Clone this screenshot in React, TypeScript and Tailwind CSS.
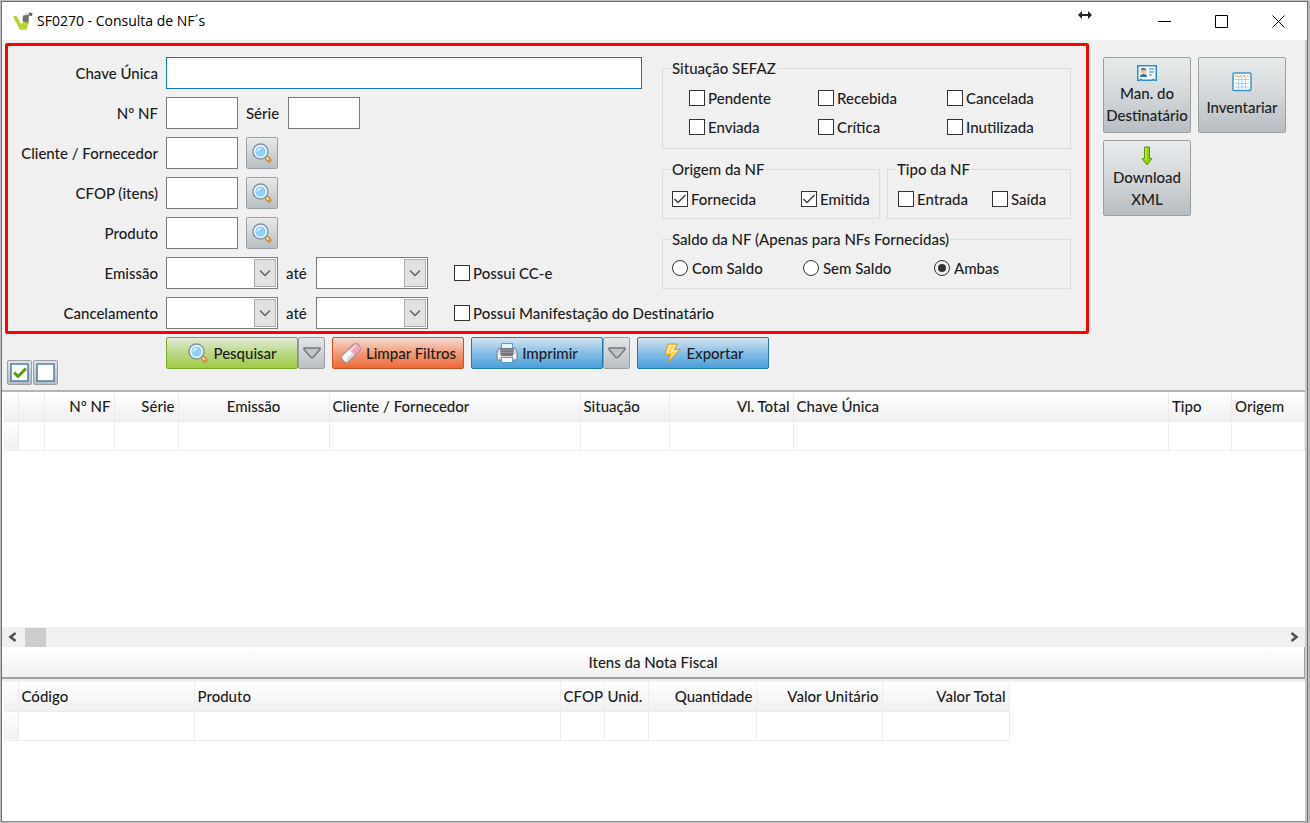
import React, { useId } from 'react';

interface Column {
    title: string;
    width?: number;
    align?: 'left' | 'center' | 'right';
}

const NOTE_COLUMNS: Column[] = [
    { title: '', width: 26 },
    { title: 'Nº NF', width: 70, align: 'right' },
    { title: 'Série', width: 64, align: 'right' },
    { title: 'Emissão', width: 151, align: 'center' },
    { title: 'Cliente / Fornecedor', width: 251 },
    { title: 'Situação', width: 89 },
    { title: 'Vl. Total', width: 124, align: 'right' },
    { title: 'Chave Única' },
    { title: 'Tipo', width: 63 },
    { title: 'Origem', width: 73 },
];

const ITEM_COLUMNS: Column[] = [
    { title: 'Código', width: 176 },
    { title: 'Produto', width: 366 },
    { title: 'CFOP', width: 44 },
    { title: 'Unid.', width: 44 },
    { title: 'Quantidade', width: 108, align: 'right' },
    { title: 'Valor Unitário', width: 126, align: 'right' },
    { title: 'Valor Total', width: 127, align: 'right' },
];

const ALIGN = {
    left: 'text-left',
    center: 'text-center',
    right: 'text-right',
};

const BUTTON_TONES = {
    green: 'border-[#7aa82a] from-[#e3ead8] via-[#bbd885] to-[#a0cb42]',
    orange: 'border-[#cc4f24] from-[#f3dcd3] via-[#f19a78] to-[#ec6a35]',
    blue: 'border-[#1f77b4] from-[#d6e4ee] via-[#84bde6] to-[#4a9fdb]',
};

/* ---------- icons ---------- */

const Magnifier = ({ size = 22 }: { size?: number }) => (
    <svg width={size} height={size} viewBox="0 0 22 22" aria-hidden="true" className="shrink-0">
        <path d="M14.5 14.5l2 2" stroke="#8d9298" strokeWidth="2.5" />
        <path d="M16.3 16.3l1.7 1.7" stroke="#c98a35" strokeWidth="5" strokeLinecap="round" />
        <path d="M16 16l1.5 1.5" stroke="#f5cf8e" strokeWidth="2.4" strokeLinecap="round" />
        <circle cx="9.5" cy="9.5" r="7.5" fill="#8ccdf4" stroke="#858e99" strokeWidth="1.5" />
        <circle cx="9.5" cy="9.5" r="6" fill="#8fd0f7" stroke="#eef6fb" strokeWidth="1.6" />
        <path d="M5.5 10a4.300 4.300 0 0 1 4.500-4.500c-.4 2.500-1.900 4-4.500 4.500z" fill="#d2edfd" />
    </svg>
);

const Eraser = () => (
    <svg width="22" height="22" viewBox="0 0 22 22" aria-hidden="true" className="shrink-0">
        <g transform="rotate(-45 11 11)">
            <rect x="0" y="6.500" width="22" height="9" rx="4" fill="#f4f4f6" stroke="#8e8488" />
            <path d="M12 7h6.500a3 3 0 0 1 3 3v2a3 3 0 0 1-3 3H12z" fill="#f3a3ba" />
            <path d="M3 9h17" stroke="#fff" strokeWidth="1.500" opacity=".7" />
            <path d="M2.500 13.500h9" stroke="#c5c5ca" strokeWidth="1.500" />
        </g>
    </svg>
);

const Printer = () => (
    <svg width="22" height="22" viewBox="0 0 22 22" aria-hidden="true" className="shrink-0">
        <rect x="5.500" y="1.500" width="11" height="8" fill="#e9f5fd" stroke="#5d9fcc" />
        <path d="M3 6h2v6h12V6h2l2 4v8H1v-8z" fill="#dcdfe2" stroke="#7a8086" />
        <rect x="4.500" y="6" width="13" height="8" fill="#75797f" />
        <path d="M5 8h12M5 10.500h12" stroke="#95999f" />
        <rect x="2" y="12.500" width="3" height="3" fill="#fff" />
        <rect x="17" y="12.500" width="3" height="3" fill="#fff" />
        <rect x="5.500" y="15.500" width="11" height="5" fill="#f3f9fd" stroke="#5d9fcc" />
    </svg>
);

const Bolt = () => (
    <svg width="20" height="22" viewBox="0 0 20 22" aria-hidden="true" className="shrink-0">
        <path d="M6 2h9.500l-3 5.500H18L6 20.500l2.500-8H3z" fill="#ffd45c" stroke="#d59a2b" strokeLinejoin="round" />
        <path d="M5 11L7.500 3.500h5.500l-3 5.500h5" fill="none" stroke="#fff0b5" strokeWidth="1.200" />
    </svg>
);

const IdCard = () => (
    <svg width="20" height="17" viewBox="0 0 20 17" aria-hidden="true">
        <path d="M.75.75h18.500v14.500h-2l-1-1-1 1H5l-1-1-1 1H.75z" fill="#f3fafe" stroke="#2f8dc0" strokeWidth="1.500" />
        <rect x="3" y="3" width="7" height="9" fill="#cfe8f8" />
        <circle cx="6.500" cy="6" r="2.300" fill="#f2c08a" />
        <path d="M4 5.500c0-3.500 5-3.500 5 0-1.500-1.500-3.500-1.500-5 0z" fill="#5b3c26" />
        <path d="M3 12c0-4 7-4 7 0z" fill="#2d6ea3" />
        <path d="M12 4h5M12 7h5M12 10h3" stroke="#6fa9d2" strokeWidth="1.300" />
    </svg>
);

const GridIcon = () => (
    <svg width="20" height="20" viewBox="0 0 20 20" aria-hidden="true">
        <rect x="1" y="1" width="18" height="17.500" rx="1" fill="#fff" stroke="#3b97c8" strokeWidth="1.500" />
        <path d="M3 4h14" stroke="#f4b740" strokeWidth="1.500" strokeDasharray="3 1" />
        <path d="M3 7.500h14M3 11.500h14M3 15h14M6.500 4v13M10 4v13M13.500 4v13" stroke="#a9d0ea" />
    </svg>
);

const DownArrow = () => (
    <svg width="12" height="20" viewBox="0 0 12 20" aria-hidden="true">
        <path d="M3.500 1h5v11.500H11L6 19l-5-6.500h2.500z" fill="#8fd000" stroke="#569a0e" strokeLinejoin="round" />
        <path d="M5 2v12" stroke="#c9f04e" strokeWidth="1.500" />
    </svg>
);

const AppLogo = () => (
    <svg width="20" height="20" viewBox="0 0 20 20" aria-hidden="true">
        <path d="M0 5.500c2-1 4-.5 4.500 1L8 13l4-3 4 1-2.500 7.500L7 19z" fill="#b5d335" />
        <path d="M10 4.500l6-1-.5 8-6-1z" fill="#6c7073" />
        <path d="M12 2.500l3-1 .5 2-3 1z" fill="#d5d8d9" />
        <path d="M16 1.500l3.500.5-.5 3-3-.5z" fill="#5d6164" />
    </svg>
);

/* ---------- controls ---------- */

const TextField = ({ label, className }: { label: string; className: string }) => (
    <input type="text" aria-label={label} className={`h-8 border bg-white px-1 outline-none ${className}`} />
);

const DateSelect = ({ label }: { label: string }) => (
    <span className="relative flex h-8 w-28 shrink-0 border border-[#7a7a7a] bg-white">
        <select aria-label={label} className="w-full appearance-none bg-transparent px-1 outline-none">
            <option value=""></option>
        </select>
        <span className="pointer-events-none absolute inset-y-px right-px flex w-[22px] items-center justify-center border border-[#adadad] bg-[#e1e1e1]">
            <svg width="12" height="8" viewBox="0 0 12 8" fill="none" stroke="#606060" strokeWidth="1.500" aria-hidden="true">
                <path d="M1 1.500l5 5 5-5" />
            </svg>
        </span>
    </span>
);

const Check = ({ label, checked = false }: { label: string; checked?: boolean }) => (
    <label className="flex h-5 items-center gap-[3px] whitespace-nowrap">
        <span className="relative flex size-4 shrink-0">
            <input type="checkbox" defaultChecked={checked} className="peer size-4 appearance-none border border-[#333333] bg-white" />
            <svg viewBox="0 0 16 16" fill="none" stroke="#404040" strokeWidth="1.500" aria-hidden="true" className="pointer-events-none absolute inset-0 hidden peer-checked:block">
                <path d="M2.500 8l3.500 3.500L13.500 4" />
            </svg>
        </span>
        {label}
    </label>
);

const RadioOption = ({ label, checked = false }: { label: string; checked?: boolean }) => (
    <label className="flex h-5 items-center gap-1 whitespace-nowrap">
        <input
            type="radio"
            name="saldo"
            defaultChecked={checked}
            className="size-4 shrink-0 appearance-none rounded-full border border-[#333333] bg-white p-[3px] checked:bg-[#333333] checked:bg-clip-content"
        />
        {label}
    </label>
);

const Group = ({ title, className = '', children }: { title: string; className?: string; children: React.ReactNode }) => (
    <fieldset className={`border border-[#dcdcdc] ${className}`}>
        <legend className="ml-2 px-px leading-5">{title}</legend>
        {children}
    </fieldset>
);

const FilterRow = ({ label, children }: { label: string; children: React.ReactNode }) => (
    <div className="flex h-8 items-center gap-2">
        <span className="w-[150px] shrink-0 text-right whitespace-nowrap">{label}</span>
        {children}
    </div>
);

const LookupButton = ({ label }: { label: string }) => (
    <button type="button" aria-label={label} className="flex size-8 items-center justify-center rounded-xs border border-[#9a9fa3] bg-linear-to-b from-[#e9ebec] to-[#b9bfc3]">
        <Magnifier />
    </button>
);

const ActionButton = ({ tone, icon, children }: { tone: keyof typeof BUTTON_TONES; icon: React.ReactNode; children: React.ReactNode }) => (
    <button type="button" className={`flex h-8 w-33 items-center justify-center gap-1 rounded-xs border bg-linear-to-b whitespace-nowrap ${BUTTON_TONES[tone]}`}>
        {icon}
        {children}
    </button>
);

const DropButton = ({ label }: { label: string }) => (
    <button type="button" aria-label={label} className="flex h-8 w-[27px] items-center justify-center rounded-xs border border-[#999ea2] bg-linear-to-b from-[#e3e6e7] to-[#b9bfc3]">
        <svg width="18" height="12" viewBox="0 0 18 12" aria-hidden="true">
            <path d="M1 1h16v1.500L10 10.500H8L1 2.500z" fill="#c3c6c9" stroke="#74787b" strokeWidth="1.500" strokeLinejoin="round" />
        </svg>
    </button>
);

const SideButton = ({ icon, children }: { icon: React.ReactNode; children: React.ReactNode }) => (
    <button type="button" className="flex h-[76px] w-22 flex-col items-center justify-center rounded-xs border border-[#9b9fa2] bg-linear-to-b from-[#e8ebec] from-0% via-[#d3d7d9] via-50% to-[#b7bdc1] to-100% leading-[22px]">
        {icon}
        {children}
    </button>
);

const DataGrid = ({ columns, className }: { columns: Column[]; className: string }) => {
    const id = useId();
    return (
        <table className={`table-fixed border-collapse ${className}`}>
            <colgroup>
                <col style={{ width: 14 }} />
                {columns.map((col, i) => (
                    <col key={`${id}-${i}`} style={col.width ? { width: col.width } : undefined} />
                ))}
            </colgroup>
            <thead>
                <tr className="h-[29px] bg-linear-to-b from-white to-[#f0f0f0]">
                    <td className="border-r border-b border-[#ececec]"></td>
                    {columns.map((col, i) => (
                        <th key={i} scope="col" className={`border-r border-b border-[#ececec] px-[3px] font-medium whitespace-nowrap ${ALIGN[col.align ?? 'left']}`}>
                            {col.title}
                        </th>
                    ))}
                </tr>
            </thead>
            <tbody>
                <tr className="h-[29px]">
                    <td className="border-r border-b border-[#ececec] bg-linear-to-b from-white to-[#f0f0f0]"></td>
                    {columns.map((_, i) => (
                        <td key={i} className="border-r border-b border-[#ececec]"></td>
                    ))}
                </tr>
            </tbody>
        </table>
    );
};

/* ---------- sections ---------- */

const TitleBar = () => (
    <header className="flex h-[38px] items-center bg-white pl-[11px] text-black">
        <AppLogo />
        <h1 className="ml-1 font-['Open_Sans','Noto_Sans',sans-serif] text-sm font-normal">SF0270 - Consulta de NF´s</h1>
        <svg width="14" height="10" viewBox="0 0 14 10" aria-hidden="true" className="mr-11 mb-3 ml-auto">
            <path d="M0 5l4-4v3h6V1l4 4-4 4V6H4v3z" fill="#222" />
        </svg>
        <button type="button" aria-label="Minimizar" className="flex h-full w-[57px] items-center justify-center">
            <svg width="13" height="13" stroke="#000" fill="none"><path d="M0 6.500h13" /></svg>
        </button>
        <button type="button" aria-label="Maximizar" className="flex h-full w-[57px] items-center justify-center">
            <svg width="13" height="13" stroke="#000" fill="none"><path d="M.5.500h12v12H.5z" /></svg>
        </button>
        <button type="button" aria-label="Fechar" className="flex h-full w-[57px] items-center justify-center">
            <svg width="13" height="13" stroke="#000" fill="none"><path d="M.5.500l12 12M12.500.500l-12 12" /></svg>
        </button>
    </header>
);

const Filters = () => (
    <section className="flex min-w-0 flex-1 gap-5 rounded-xs border-3 border-[#fe0000] pt-[11px] pr-[15px] pb-[2px]">
        <div className="flex min-w-0 flex-1 flex-col gap-2">
            <FilterRow label="Chave Única">
                <TextField label="Chave Única" className="min-w-0 flex-1 border-[#0f78d4]" />
            </FilterRow>
            <FilterRow label="Nº NF">
                <TextField label="Nº NF" className="w-[72px] border-[#7a7a7a]" />
                <span className="w-[34px]">Série</span>
                <TextField label="Série" className="w-[72px] border-[#7a7a7a]" />
            </FilterRow>
            {['Cliente / Fornecedor', 'CFOP (itens)', 'Produto'].map(name => (
                <FilterRow key={name} label={name}>
                    <TextField label={name} className="w-[72px] border-[#7a7a7a]" />
                    <LookupButton label={`Buscar ${name}`} />
                </FilterRow>
            ))}
            <FilterRow label="Emissão">
                <DateSelect label="Emissão inicial" />
                <span className="w-[22px] shrink-0">até</span>
                <DateSelect label="Emissão final" />
                <div className="ml-[18px]">
                    <Check label="Possui CC-e" />
                </div>
            </FilterRow>
            <FilterRow label="Cancelamento">
                <DateSelect label="Cancelamento inicial" />
                <span className="w-[22px] shrink-0">até</span>
                <DateSelect label="Cancelamento final" />
                <div className="ml-[18px]">
                    <Check label="Possui Manifestação do Destinatário" />
                </div>
            </FilterRow>
        </div>
        <div className="flex w-[409px] shrink-0 flex-col gap-[10px] pt-px">
            <Group title="Situação SEFAZ" className="h-[91px]">
                <div className="grid grid-cols-[129px_129px_auto] gap-y-[9px] pt-[10px] pl-[26px]">
                    <Check label="Pendente" />
                    <Check label="Recebida" />
                    <Check label="Cancelada" />
                    <Check label="Enviada" />
                    <Check label="Crítica" />
                    <Check label="Inutilizada" />
                </div>
            </Group>
            <div className="flex gap-[7px]">
                <Group title="Origem da NF" className="h-15 w-[218px]">
                    <div className="grid grid-cols-[129px_auto] pt-[10px] pl-[9px]">
                        <Check label="Fornecida" checked />
                        <Check label="Emitida" checked />
                    </div>
                </Group>
                <Group title="Tipo da NF" className="h-15 flex-1">
                    <div className="grid grid-cols-[94px_auto] pt-[10px] pl-[10px]">
                        <Check label="Entrada" />
                        <Check label="Saída" />
                    </div>
                </Group>
            </div>
            <Group title="Saldo da NF (Apenas para NFs Fornecidas)" className="h-15">
                <div className="grid grid-cols-[131px_131px_auto] pt-[9px] pl-[9px]">
                    <RadioOption label="Com Saldo" />
                    <RadioOption label="Sem Saldo" />
                    <RadioOption label="Ambas" checked />
                </div>
            </Group>
        </div>
    </section>
);

const Toolbar = () => (
    <div className="flex h-14 pt-[3px] pl-[5px]">
        <div className="mb-[5px] flex w-[159px] items-end gap-px">
            <button type="button" aria-label="Marcar todos" className="flex size-[25px] items-center justify-center rounded-xs border border-[#9a9fa3] bg-linear-to-b from-[#dfe2e4] to-[#b5bbbf]">
                <svg width="19" height="19" viewBox="0 0 19 19" aria-hidden="true">
                    <rect x="1" y="1" width="17" height="17" fill="#fff" stroke="#4c7fae" strokeWidth="1.500" />
                    <path d="M4 9.500l4 4 8-8" fill="none" stroke="#5a9c0c" strokeWidth="3" />
                </svg>
            </button>
            <button type="button" aria-label="Desmarcar todos" className="flex size-[25px] items-center justify-center rounded-xs border border-[#9a9fa3] bg-linear-to-b from-[#dfe2e4] to-[#b5bbbf]">
                <svg width="19" height="19" viewBox="0 0 19 19" aria-hidden="true">
                    <rect x="1" y="1" width="17" height="17" fill="#fff" stroke="#4c7fae" strokeWidth="1.500" />
                </svg>
            </button>
        </div>
        <div className="flex gap-[7px]">
            <div className="flex">
                <ActionButton tone="green" icon={<Magnifier />}>Pesquisar</ActionButton>
                <DropButton label="Opções de pesquisa" />
            </div>
            <ActionButton tone="orange" icon={<Eraser />}>Limpar Filtros</ActionButton>
            <div className="flex">
                <ActionButton tone="blue" icon={<Printer />}>Imprimir</ActionButton>
                <DropButton label="Opções de impressão" />
            </div>
            <ActionButton tone="blue" icon={<Bolt />}>Exportar</ActionButton>
        </div>
    </div>
);

const HorizontalScroll = () => (
    <div className="flex h-5 items-center bg-[#f0f0f0] px-[6px]">
        <button type="button" aria-label="Rolar para a esquerda" className="flex w-[17px]">
            <svg width="9" height="10" viewBox="0 0 9 10" fill="none" stroke="#505050" strokeWidth="2.500" aria-hidden="true"><path d="M7.500 1l-5 4 5 4" /></svg>
        </button>
        <span className="h-[19px] w-[21px] bg-[#cdcdcd]" />
        <button type="button" aria-label="Rolar para a direita" className="ml-auto flex">
            <svg width="9" height="10" viewBox="0 0 9 10" fill="none" stroke="#505050" strokeWidth="2.500" aria-hidden="true"><path d="M1.500 1l5 4-5 4" /></svg>
        </button>
    </div>
);

const App: React.FC = () => {
    return (
        <div className="flex min-h-screen flex-col bg-[#bdbdbd] pt-px pr-[2px] pb-px pl-px font-['Lato','Liberation_Sans',sans-serif] text-[15px] leading-5 font-medium text-[#1c1c1c]">
            <div className="flex flex-1 flex-col border border-b-0 border-[#2a7fc9] bg-white">
                <TitleBar />
                <main className="flex flex-1 flex-col border-r-2 border-b border-r-[#c9c9c9] border-b-[#8f8f8f]">
                    <div className="bg-[#f0f0f0] pt-[3px]">
                        <div className="flex gap-[14px] pr-[19px] pl-[3px]">
                            <Filters />
                            <div className="grid grid-cols-2 content-start gap-[7px] pt-[14px]">
                                <SideButton icon={<IdCard />}>
                                    <span>Man. do</span>
                                    <span>Destinatário</span>
                                </SideButton>
                                <SideButton icon={<GridIcon />}>
                                    <span className="pt-1">Inventariar</span>
                                </SideButton>
                                <SideButton icon={<DownArrow />}>
                                    <span>Download</span>
                                    <span>XML</span>
                                </SideButton>
                            </div>
                        </div>
                        <Toolbar />
                    </div>
                    <section className="flex-1 border-t-2 border-[#b4b4b4] pl-[2px]">
                        <DataGrid columns={NOTE_COLUMNS} className="w-full" />
                    </section>
                    <HorizontalScroll />
                    <section>
                        <h2 className="flex h-8 items-center justify-center border-r border-b-2 border-[#a0a0a0] bg-linear-to-b from-white to-[#f0f0f0] text-[15px] font-medium">
                            Itens da Nota Fiscal
                        </h2>
                        <div className="h-[142px] border-t-3 border-[#f0f0f0] pl-[2px]">
                            <DataGrid columns={ITEM_COLUMNS} className="w-[1005px]" />
                        </div>
                    </section>
                </main>
            </div>
        </div>
    );
};

export default App;
